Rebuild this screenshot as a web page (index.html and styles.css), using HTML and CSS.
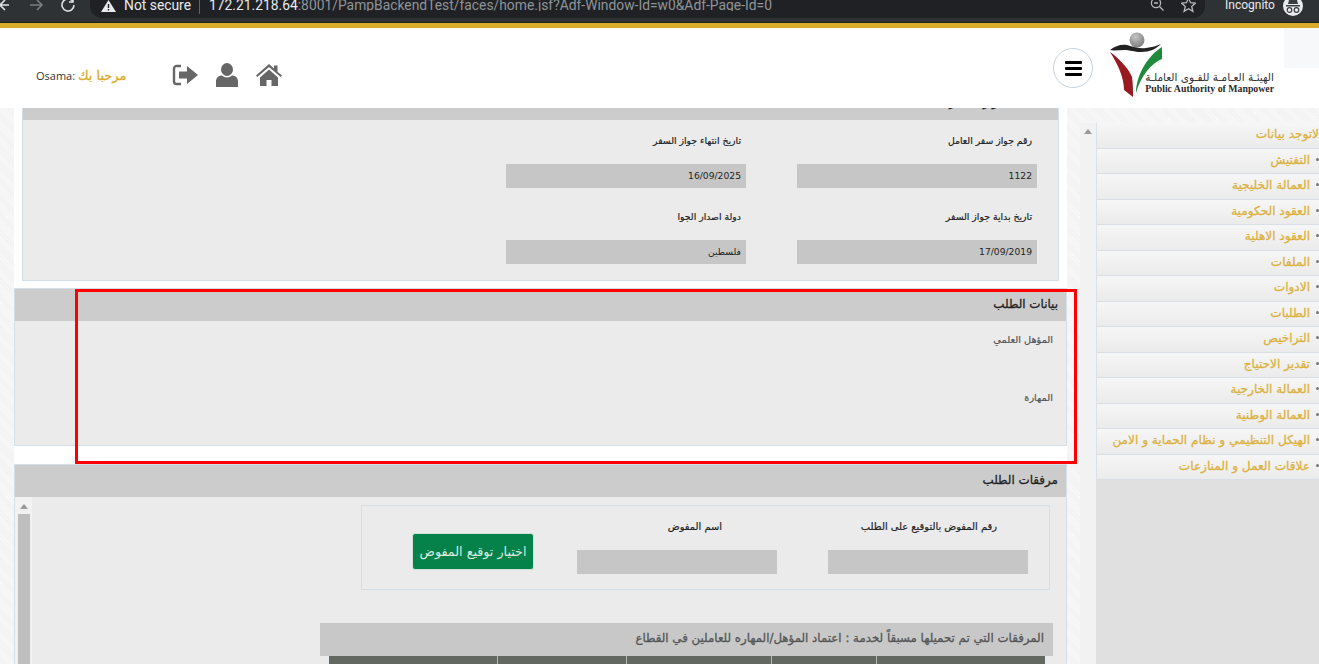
FILE: index.html
```html
<!DOCTYPE html>
<html lang="ar">

<head>
  <meta charset="UTF-8">
  <meta name="viewport" content="width=device-width, initial-scale=1.0">
  <title>Public Authority of Manpower</title>
  <link rel="stylesheet" href="styles.css">
</head>

<body>
  <!-- Browser toolbar -->
  <div class="browser-bar">
    <div class="nav-icons">
      <svg class="nav-back" width="10" height="12" viewBox="0 0 10 12"><path d="M10 5H1M6 0L1 5l5 5" fill="none" stroke="#dfe1e3" stroke-width="1.6"/></svg>
      <svg class="nav-forward" width="15" height="12" viewBox="0 0 15 12"><path d="M1 5h12M8 0l5 5-5 5" fill="none" stroke="#7a7d80" stroke-width="1.6"/></svg>
      <svg class="nav-reload" width="15" height="14" viewBox="0 0 15 14"><path d="M13 5a6 6 0 1 1-1.500-4M12 -2v4H8" fill="none" stroke="#dfe1e3" stroke-width="1.600"/></svg>
    </div>
    <div class="address">
      <svg class="warn" width="15" height="12" viewBox="0 0 15 12"><path d="M7.500 0l7.500 12H0z" fill="#e8eaed"/><path d="M6.800 4h1.400v4H6.800zM6.800 9h1.400v1.400H6.800z" fill="#202124"/></svg>
      <span class="not-secure">Not secure</span>
      <span class="address-sep"></span>
      <span class="url"><b>172.21.218.64</b>:8001/PampBackendTest/faces/home.jsf?Adf-Window-Id=w0&amp;Adf-Page-Id=0</span>
      <svg class="zoom-out" width="15" height="15" viewBox="0 0 15 15"><circle cx="6" cy="3" r="4.600" fill="none" stroke="#b5b8bb" stroke-width="1.300"/><path d="M4 3h4M9.500 6.500l4 4" stroke="#b5b8bb" stroke-width="1.300"/></svg>
      <svg class="star" width="15" height="13" viewBox="0 0 15 13"><path d="M7.500 -2l2 4.700 5 .4-3.800 3.300 1.200 5-4.400-2.700-4.400 2.700 1.200-5L.5 3.100l5-.4z" fill="none" stroke="#b5b8bb" stroke-width="1.300"/></svg>
    </div>
    <span class="incognito">Incognito</span>
    <svg class="incognito-icon" width="20" height="18" viewBox="0 0 20 18"><circle cx="10" cy="6" r="10" fill="#e8eaed"/><path d="M3 5h14v1.500H3zM6 0h8l1 4H5z" fill="#3a3d40"/><circle cx="6.500" cy="10" r="2.300" fill="none" stroke="#3a3d40" stroke-width="1.200"/><circle cx="13.500" cy="10" r="2.300" fill="none" stroke="#3a3d40" stroke-width="1.200"/></svg>
  </div>

  <div class="page">
    <div class="header">
      <div class="user-area">
        <div class="welcome"><span>Osama:</span> <span class="welcome-ar" dir="rtl">مرحبا بك</span></div>
        <div class="header-icons">
          <svg width="26" height="22" viewBox="0 0 26 22"><path d="M9 2H4.500A2.500 2.500 0 0 0 2 4.500v13A2.500 2.500 0 0 0 4.500 20H9" fill="none" stroke="#666" stroke-width="2.400"/><path d="M7 7.500h8V2l11 9-11 9v-5.500H7z" fill="#666"/></svg>
          <svg width="22" height="24" viewBox="0 0 22 24"><ellipse cx="11" cy="6.500" rx="6" ry="6.500" fill="#666"/><path d="M0 24v-5.500C0 14.500 3 12.500 6 12.500c1.500 1.300 3 2 5 2s3.500-.7 5-2c3 0 6 2 6 6V24z" fill="#666"/></svg>
          <svg width="26" height="22" viewBox="0 0 26 22"><path d="M13 0l5 4.500V1.500h3.500v6.200L26 11.500l-1.300 1.500L13 3 1.300 13 0 11.500z" fill="#666"/><path d="M4 13.500L13 5.500l9 8V22h-6.500v-6h-5v6H4z" fill="#666"/></svg>
        </div>
      </div>
      <div class="brand">
        <button class="menu-btn" aria-label="menu">
          <span></span><span></span><span></span>
        </button>
        <div class="logo">
          <svg class="logo-mark" width="56" height="68" viewBox="0 0 56 68">
            <defs>
              <radialGradient id="ball" cx="0.4" cy="0.3" r="0.8"><stop offset="0" stop-color="#c4c4c4"/><stop offset="1" stop-color="#777"/></radialGradient>
            </defs>
            <circle cx="29" cy="9" r="7.500" fill="url(#ball)"/>
            <path d="M2 19c5-4 11-6 17-5 7 2 13 4 19 3 6-1 11-2 15-4-5 5-11 8-20 8-7 0-11-2-17-2-5 0-10 1-14 0z" fill="#222"/>
            <path d="M2 21C9 26 20 36 24 46 25 53 25 60 25 66L16 59C16 46 10 34 2 21z" fill="#98191f"/>
            <path d="M54 16V28C44 32 33 44 28 62 28 46 38 26 54 16z" fill="#1f8a3c"/>
          </svg>
          <div class="logo-text">
            <div class="logo-ar" dir="rtl">الهيئـة العـامـة للقـوى العاملـة</div>
            <div class="logo-en">Public Authority of Manpower</div>
          </div>
        </div>
        <div class="corner-box"></div>
      </div>
    </div>

    <div class="content">
      <div class="main" dir="rtl">
        <div class="panel panel-passport">
          <div class="panel-title">بيانات جواز السفر</div>
          <div class="passport-grid">
            <div class="field">
              <div class="field-label">رقم جواز سفر العامل</div>
              <div class="field-value">1122</div>
            </div>
            <div class="field">
              <div class="field-label">تاريخ انتهاء جواز السفر</div>
              <div class="field-value">16/09/2025</div>
            </div>
            <div class="field">
              <div class="field-label">تاريخ بداية جواز السفر</div>
              <div class="field-value">17/09/2019</div>
            </div>
            <div class="field">
              <div class="field-label">دولة اصدار الجوا</div>
              <div class="field-value">فلسطين</div>
            </div>
          </div>
        </div>

        <div class="panel panel-wide">
          <div class="panel-title">بيانات الطلب</div>
          <div class="request-body">
            <div class="request-label">المؤهل العلمي</div>
            <div class="request-label">المهارة</div>
          </div>
        </div>

        <div class="panel panel-wide panel-attach">
          <div class="panel-title">مرفقات الطلب</div>
          <div class="attach-body">
            <div class="attach-content">
              <div class="sign-box">
                <div class="sign-field">
                  <div class="sign-label">رقم المفوض بالتوقيع على الطلب</div>
                  <div class="sign-input"></div>
                </div>
                <div class="sign-field">
                  <div class="sign-label sign-label-name">اسم المفوض</div>
                  <div class="sign-input"></div>
                </div>
                <button class="pick-btn">اختيار توقيع المفوض</button>
              </div>
              <div class="sub-panel">
                <div class="sub-title">المرفقات التي تم تحميلها مسبقاً لخدمة : اعتماد المؤهل/المهاره للعاملين في القطاع</div>
                <div class="sub-table-head">
                  <div class="col-a"></div>
                  <div class="col-b"></div>
                  <div class="col-c"></div>
                  <div class="col-d"></div>
                  <div class="col-e"></div>
                </div>
              </div>
            </div>
            <div class="scroll-col">
              <div class="scroll-arrow"></div>
              <div class="scroll-thumb"></div>
            </div>
          </div>
        </div>

        <!-- Red annotation drawn over the screenshot -->
        <div class="red-box"></div>
      </div>

      <div class="side">
        <div class="side-scroll"><div class="scroll-arrow"></div></div>
        <ul class="menu" dir="rtl">
          <li class="no-bullet">لاتوجد بيانات</li>
          <li>التفتيش</li>
          <li>العمالة الخليجية</li>
          <li>العقود الحكومية</li>
          <li>العقود الاهلية</li>
          <li>الملفات</li>
          <li>الادوات</li>
          <li>الطلبات</li>
          <li>التراخيص</li>
          <li>تقدير الاحتياج</li>
          <li>العمالة الخارجية</li>
          <li>العمالة الوطنية</li>
          <li>الهيكل التنظيمي و نظام الحماية و الامن</li>
          <li>علاقات العمل و المنازعات</li>
        </ul>
      </div>
    </div>
  </div>
</body>

</html>
```

FILE: styles.css
```css
* {
  margin: 0;
  padding: 0;
  box-sizing: border-box;
}

html,
body {
  height: 664px;
  overflow: hidden;
}

body {
  font-family: "DejaVu Sans", "Noto Sans", sans-serif;
  background: #fff;
}

/* Browser toolbar */
.browser-bar {
  height: 23px;
  background: #2f3235;
  display: flex;
  align-items: flex-start;
  border-bottom: 1px solid #1d1f21;
  font-family: Roboto, "Noto Sans", sans-serif;
  overflow: hidden;
}

.nav-icons {
  width: 90px;
  flex: none;
  display: flex;
}

.nav-back {
  margin-left: -1px;
}

.nav-forward {
  margin-left: 20px;
}

.nav-reload {
  margin-left: 17px;
}

.address {
  width: 1115px;
  height: 18px;
  flex: none;
  background: #202124;
  border-radius: 0 0 12px 12px;
  display: flex;
  align-items: flex-start;
  padding-left: 11px;
  white-space: nowrap;
}

.warn {
  flex: none;
  margin-right: 8px;
}

.not-secure {
  color: #e8eaed;
  width: 67px;
  flex: none;
  font-size: 13.850px;
  line-height: 11px;
}

.address-sep {
  width: 1px;
  height: 14px;
  background: #5f6368;
  margin: 0 9px 0 8px;
  flex: none;
}

.url {
  color: #8f9499;
  width: 931px;
  flex: none;
  overflow: hidden;
  font-size: 13.850px;
  line-height: 11px;
}

.url b {
  color: #e8eaed;
  font-weight: 400;
}

.zoom-out {
  flex: none;
  margin-left: 10px;
}

.star {
  flex: none;
  margin-left: 16px;
}

.incognito {
  color: #e8eaed;
  font-size: 12px;
  line-height: 10px;
  margin-left: 20px;
}

.incognito-icon {
  margin-left: 8px;
}

/* Gold line + header */
.page {
  border-top: 5px solid #d9ad2b;
}

.header {
  height: 80px;
  background: #fff;
  display: flex;
  justify-content: space-between;
}

.user-area {
  display: flex;
  padding: 35px 0 0 36px;
}

.welcome {
  font-size: 11px;
  color: #333;
  width: 136px;
  line-height: 16px;
  padding-top: 5px;
  font-family: "Open Sans", sans-serif;
}

.welcome-ar {
  font-family: "DejaVu Sans", sans-serif;
  color: #d9ad2b;
  font-size: 12.900px;
  -webkit-text-stroke: 0.3px #d9ad2b;
}

.header-icons {
  display: flex;
  align-items: center;
  gap: 18px;
  height: 24px;
}

.brand {
  display: flex;
  align-items: flex-start;
}

.menu-btn {
  width: 40px;
  height: 40px;
  margin-top: 20px;
  margin-right: 15px;
  border: 1px solid #c9d3dc;
  border-radius: 50%;
  background: #fff;
  display: flex;
  flex-direction: column;
  align-items: center;
  justify-content: center;
  gap: 3px;
}

.menu-btn span {
  width: 17px;
  height: 3px;
  background: #000;
  border-radius: 1px;
}

.logo {
  display: flex;
  width: 176px;
  padding-top: 3px;
}

.logo-mark {
  flex: none;
}

.logo-text {
  margin: 40px 0 0 -22px;
  width: 132px;
  text-align: right;
  white-space: nowrap;
}

.logo-ar {
  font-size: 10.500px;
  line-height: 12px;
  color: #333;
}

.logo-en {
  font-family: "Liberation Serif", serif;
  font-weight: 700;
  font-size: 9.800px;
  line-height: 11px;
  color: #2a2a2a;
}

.corner-box {
  width: 35px;
  height: 40px;
  background: #f7f8fa;
}

/* Page body */
.content {
  height: 556px;
  display: flex;
  overflow: hidden;
  background: #f6f6f6;
  background-image: repeating-linear-gradient(45deg, #f2f2f2 0 1px, #f8f8f8 1px 2px);
}

.main {
  position: relative;
  width: 1053px;
  margin-left: 14px;
  flex: none;
  background: #fff;
  height: 100%;
}

.panel {
  background: #ebebeb;
  border: 1px solid #d5dfe8;
}

.panel-title {
  height: 32px;
  background: #cccccc;
  color: #222;
  font-size: 11.900px;
  -webkit-text-stroke: 0.3px #222;
  line-height: 30px;
  padding-right: 8px;
}

.panel-passport {
  margin: -21px 8px 0;
  border-top: 0;
  height: 194px;
}

.panel-passport .panel-title {
  height: 33px;
  line-height: 10px;
  padding: 10px 20px 0 0;
  overflow: hidden;
}

.passport-grid {
  display: grid;
  grid-template-columns: 240px 240px;
  column-gap: 51px;
  row-gap: 21px;
  padding: 13px 21px 0 0;
}

.field-label {
  font-size: 9.300px;
  -webkit-text-stroke: 0.2px #222;
  line-height: 16px;
  color: #222;
  padding-right: 5px;
  margin-bottom: 15px;
}

.field-value {
  height: 24px;
  background: #c6c6c6;
  color: #222;
  font-size: 9.200px;
  line-height: 24px;
  padding-right: 5px;
}

.panel-wide {
  margin-top: 7px;
}

.request-body {
  height: 124px;
  padding: 11px 13px 0 0;
}

.request-label {
  height: 58px;
  font-size: 9.800px;
  -webkit-text-stroke: 0.2px #555;
  line-height: 16px;
  color: #555;
}

.panel-attach {
  margin-top: 18px;
  height: 220px;
  border-bottom: 0;
}

.attach-body {
  display: flex;
}

.attach-content {
  flex: 1;
  padding: 8px 16px 0 0;
}

.scroll-col {
  width: 17px;
  flex: none;
  height: 180px;
  background: #f2f2f2;
  padding: 7px 2px 0 3px;
}

.scroll-arrow {
  width: 0;
  height: 0;
  border-left: 4px solid transparent;
  border-right: 4px solid transparent;
  border-bottom: 5px solid #9a9a9a;
  margin: 0 auto;
}

.scroll-thumb {
  height: 160px;
  background: #bfbfbf;
  margin-top: 5px;
}

.sign-box {
  width: 689px;
  height: 85px;
  border: 1px solid #d5dfe8;
  display: flex;
  align-items: flex-start;
  gap: 51px;
  padding-right: 21px;
}

.sign-field {
  width: 200px;
  flex: none;
  padding-top: 13px;
}

.sign-label {
  font-size: 9.900px;
  -webkit-text-stroke: 0.2px #222;
  line-height: 16px;
  color: #222;
  padding-right: 31px;
  margin-bottom: 15px;
  white-space: nowrap;
}

.sign-label-name {
  padding-right: 55px;
}

.sign-input {
  height: 24px;
  background: #c6c6c6;
}

.pick-btn {
  width: 122px;
  height: 37px;
  margin: 27px -8px 0 0;
  background: #058249;
  border: 1px solid #cfe3d8;
  border-radius: 3px;
  color: #d8ece2;
  font-family: inherit;
  font-size: 12.700px;
}

.sub-panel {
  width: 733px;
  margin-top: 33px;
  margin-right: -3px;
  padding-bottom: 8px;
}

.sub-title {
  height: 33px;
  background: #c8c8c8;
  color: #555;
  font-size: 11.800px;
  -webkit-text-stroke: 0.3px #555;
  line-height: 30px;
  padding-right: 9px;
  white-space: nowrap;
}

.sub-table-head {
  display: flex;
  height: 8px;
  margin: 0 8px 0 9px;
  background: #636861;
}

.sub-table-head div {
  border-left: 1px solid #b5b8b3;
}

.col-a {
  width: 169px;
}

.col-b {
  width: 105px;
}

.col-c {
  width: 145px;
}

.col-d {
  width: 129px;
}

.col-e {
  flex: 1;
  border-left: 0 !important;
}

/* Annotation */
.red-box {
  position: absolute;
  left: 61px;
  top: 181px;
  width: 1002px;
  height: 175px;
  border: 3px solid #ff0000;
}

/* Side menu */
.side {
  display: flex;
  margin-left: 13px;
  flex: none;
}

.side-scroll {
  width: 16px;
  flex: none;
  margin-top: 15px;
  background: #f2f2f2;
  padding-top: 6px;
}

.menu {
  list-style: none;
  width: 223px;
  flex: none;
  padding-top: 15px;
  background: #e0e0e0;
  background-clip: content-box;
  white-space: nowrap;
}

.menu li {
  height: 25.500px;
  background: linear-gradient(#f6f6f6, #ebebeb);
  border-left: 1px solid #dbe1e6;
  border-bottom: 1px solid #d9dfe4;
  color: #dcb13f;
  font-size: 12.100px;
  -webkit-text-stroke: 0.3px #dcb13f;
  line-height: 23px;
  padding-right: 9px;
  position: relative;
}

.menu li:not(.no-bullet)::before {
  content: "";
  position: absolute;
  right: 0;
  top: 9px;
  width: 3px;
  height: 3px;
  border-radius: 50%;
  background: #777;
}

.menu .no-bullet {
  padding-right: 0;
}
```
